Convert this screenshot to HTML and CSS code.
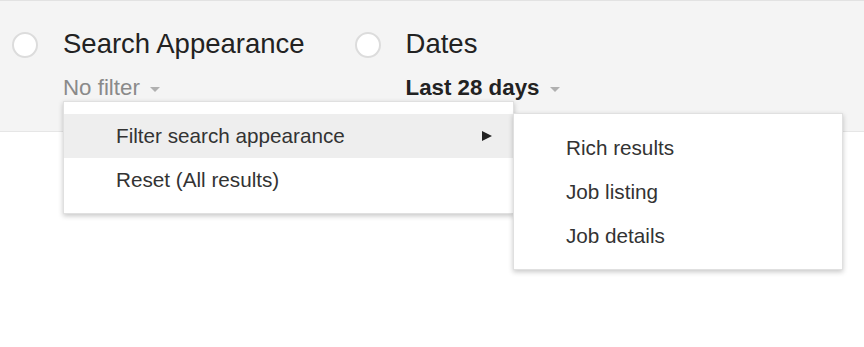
FILE: index.html
```html
<!DOCTYPE html>
<html lang="en">
<head>
<meta charset="UTF-8">
<meta name="viewport" content="width=device-width, initial-scale=1.0">
<title>Search Analytics filters</title>
<link rel="stylesheet" href="styles.css">
</head>
<body>
  <div id="page">
    <div id="toolbar">
      <div class="filter">
        <span class="radio"></span>
        <div class="filter-text">
          <div class="filter-title">Search Appearance</div>
          <div class="filter-value muted">No filter <span class="caret"></span></div>
        </div>
      </div>
      <div class="filter">
        <span class="radio"></span>
        <div class="filter-text">
          <div class="filter-title">Dates</div>
          <div class="filter-value strong">Last 28 days <span class="caret"></span></div>
        </div>
      </div>
    </div>

    <!-- menu aberto do filtro de aparencia -->
    <div class="menu" id="appearanceMenu">
      <div class="menu-item active">Filter search appearance <span class="submenu-arrow"></span></div>
      <div class="menu-item">Reset (All results)</div>
    </div>
    <div class="menu" id="appearanceSubmenu">
      <div class="menu-item">Rich results</div>
      <div class="menu-item">Job listing</div>
      <div class="menu-item">Job details</div>
    </div>
  </div>
</body>
</html>
```

FILE: styles.css
```css
body {
  margin: 0;
  font-family: "Liberation Sans", Arial, sans-serif;
  background-color: #fff;
  color: #222;
}
#page {
  position: relative;
  height: 347px;
}
#toolbar {
  display: flex;
  gap: 50px;
  height: 132px;
  box-sizing: border-box;
  padding: 27px 0 0 12px;
  background-color: #f4f4f4;
  border-top: 1px solid #e2e2e2;
  border-bottom: 1px solid #e6e6e6;
}
.filter {
  display: flex;
  align-items: flex-start;
  gap: 25px;
}
.radio {
  width: 22px;
  height: 22px;
  margin-top: 4px;
  border: 2px solid #dcdcdc;
  border-radius: 50%;
  background-color: #fff;
}
.filter-title {
  font-size: 27.5px;
  line-height: 32px;
  color: #222;
}
.filter-value {
  margin-top: 15px;
  font-size: 22.3px;
  line-height: 26px;
}
.muted {
  color: #8a8a8a;
}
.strong {
  font-weight: bold;
  color: #222;
}
.caret {
  display: inline-block;
  vertical-align: middle;
  margin-left: 4px;
  border-top: 5px solid #b0b0b0;
  border-left: 5px solid transparent;
  border-right: 5px solid transparent;
}
.menu {
  position: absolute;
  background-color: #fff;
  padding: 12px 0 11px;
  box-sizing: border-box;
  border: 1px solid rgba(0, 0, 0, 0.12);
  box-shadow: 0 2px 5px rgba(0, 0, 0, 0.22);
}
#appearanceMenu {
  left: 63px;
  top: 101px;
  width: 451px;
}
#appearanceSubmenu {
  left: 513px;
  top: 113px;
  width: 330px;
}
.menu-item {
  display: flex;
  align-items: center;
  justify-content: space-between;
  height: 44px;
  padding: 0 21px 0 52px;
  font-size: 20.7px;
  color: #333;
}
.menu-item.active {
  background-color: #eee;
}
.submenu-arrow {
  border-left: 10px solid #222;
  border-top: 5px solid transparent;
  border-bottom: 5px solid transparent;
}
```
